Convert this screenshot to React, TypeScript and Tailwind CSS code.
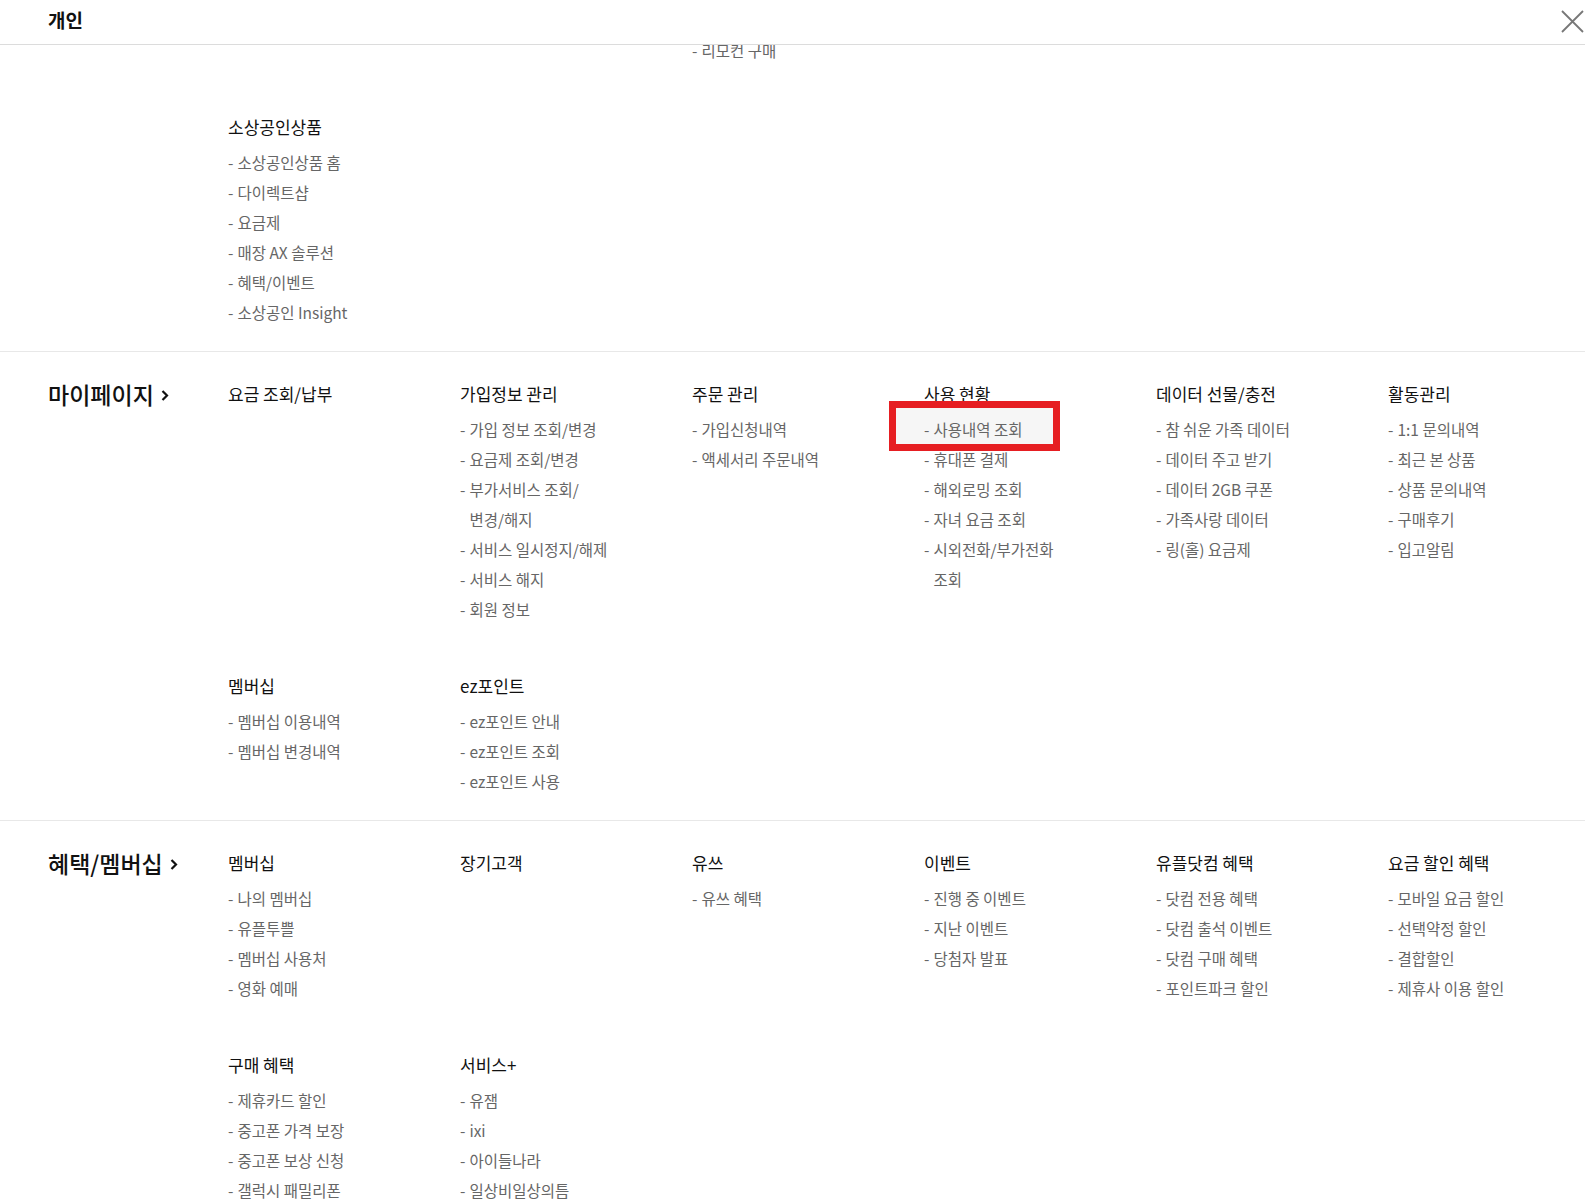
import React from "react";

type Item = { lines: string[]; active?: boolean };
type Group = { title?: string; items: Item[] } | null;

const it = (...lines: string[]): Item => ({ lines });

interface Section {
  title?: string;
  rows: Group[][];
}

const sections: Section[] = [
  {
    rows: [
      [null, null, { items: [it("리모컨 구매")] }],
      [
        {
          title: "소상공인상품",
          items: [
            it("소상공인상품 홈"),
            it("다이렉트샵"),
            it("요금제"),
            it("매장 AX 솔루션"),
            it("혜택/이벤트"),
            it("소상공인 Insight"),
          ],
        },
      ],
    ],
  },
  {
    title: "마이페이지",
    rows: [
      [
        { title: "요금 조회/납부", items: [] },
        {
          title: "가입정보 관리",
          items: [
            it("가입 정보 조회/변경"),
            it("요금제 조회/변경"),
            it("부가서비스 조회/", "변경/해지"),
            it("서비스 일시정지/해제"),
            it("서비스 해지"),
            it("회원 정보"),
          ],
        },
        {
          title: "주문 관리",
          items: [it("가입신청내역"), it("액세서리 주문내역")],
        },
        {
          title: "사용 현황",
          items: [
            { lines: ["사용내역 조회"], active: true },
            it("휴대폰 결제"),
            it("해외로밍 조회"),
            it("자녀 요금 조회"),
            it("시외전화/부가전화", "조회"),
          ],
        },
        {
          title: "데이터 선물/충전",
          items: [
            it("참 쉬운 가족 데이터"),
            it("데이터 주고 받기"),
            it("데이터 2GB 쿠폰"),
            it("가족사랑 데이터"),
            it("링(홀) 요금제"),
          ],
        },
        {
          title: "활동관리",
          items: [
            it("1:1 문의내역"),
            it("최근 본 상품"),
            it("상품 문의내역"),
            it("구매후기"),
            it("입고알림"),
          ],
        },
      ],
      [
        {
          title: "멤버십",
          items: [it("멤버십 이용내역"), it("멤버십 변경내역")],
        },
        {
          title: "ez포인트",
          items: [it("ez포인트 안내"), it("ez포인트 조회"), it("ez포인트 사용")],
        },
      ],
    ],
  },
  {
    title: "혜택/멤버십",
    rows: [
      [
        {
          title: "멤버십",
          items: [
            it("나의 멤버십"),
            it("유플투쁠"),
            it("멤버십 사용처"),
            it("영화 예매"),
          ],
        },
        { title: "장기고객", items: [] },
        { title: "유쓰", items: [it("유쓰 혜택")] },
        {
          title: "이벤트",
          items: [it("진행 중 이벤트"), it("지난 이벤트"), it("당첨자 발표")],
        },
        {
          title: "유플닷컴 혜택",
          items: [
            it("닷컴 전용 혜택"),
            it("닷컴 출석 이벤트"),
            it("닷컴 구매 혜택"),
            it("포인트파크 할인"),
          ],
        },
        {
          title: "요금 할인 혜택",
          items: [
            it("모바일 요금 할인"),
            it("선택약정 할인"),
            it("결합할인"),
            it("제휴사 이용 할인"),
          ],
        },
      ],
      [
        {
          title: "구매 혜택",
          items: [
            it("제휴카드 할인"),
            it("중고폰 가격 보장"),
            it("중고폰 보상 신청"),
            it("갤럭시 패밀리폰"),
          ],
        },
        {
          title: "서비스+",
          items: [it("유잼"), it("ixi"), it("아이들나라"), it("일상비일상의틈")],
        },
      ],
    ],
  },
];

function MenuItem({ item }: { item: Item }) {
  return (
    <li className="relative flex text-[15.5px] leading-[30px] text-[#666]">
      {item.active && (
        <span className="absolute -top-[13px] -bottom-[7px] -left-[35px] w-[171px] border-[7px] border-[#e61e22] bg-[#f6f6f6]" />
      )}
      <span className="relative mr-[4px]">-</span>
      <span className="relative">
        {item.lines.map((l, i) => (
          <span key={i} className="block">
            {l}
          </span>
        ))}
      </span>
    </li>
  );
}

function Column({ group }: { group: Group }) {
  if (!group) return <div />;
  return (
    <div>
      {group.title && (
        <h3 className="mt-[1px] text-[17px] font-normal leading-[30px] text-[#111]">
          {group.title}
        </h3>
      )}
      {group.items.length > 0 && (
        <ul className={group.title ? "mt-[5px]" : ""}>
          {group.items.map((item, i) => (
            <MenuItem key={i} item={item} />
          ))}
        </ul>
      )}
    </div>
  );
}

function Chevron() {
  return (
    <svg
      width="8"
      height="13"
      viewBox="0 0 8 13"
      className="ml-[7px] mt-[2px]"
      fill="none"
      stroke="#111"
      strokeWidth="2.2"
    >
      <path d="M1.5 2 L6 6.5 L1.5 11" />
    </svg>
  );
}

export default function App() {
  return (
    <div className="min-h-screen w-full overflow-hidden bg-white font-['Noto_Sans_CJK_KR','Noto_Sans',sans-serif]">
      <header className="relative z-10 flex h-[45px] items-center justify-between border-b border-[#dcdcdc] bg-white pb-[4px] pl-[48px]">
        <h1 className="text-[19px] font-bold text-[#111]">개인</h1>
        <button className="mr-[1px] mt-[2px] flex h-[24px] w-[24px] items-center justify-center">
          <svg width="23" height="23" viewBox="0 0 23 23" stroke="#777" strokeWidth="1.8">
            <path d="M1 1 L22 22 M22 1 L1 22" />
          </svg>
        </button>
      </header>

      <main className="-mt-[10px]">
        {sections.map((section, si) => (
          <section
            key={si}
            className={`flex border-b border-[#e8e8e8] pb-[24px] pl-[48px] ${
              si === 0 ? "pt-0" : "pt-[26px]"
            }`}
          >
            <div className="w-[180px] shrink-0">
              {section.title && (
                <h2 className="mt-[1px] flex items-center text-[23px] font-medium leading-[30px] text-[#111]">
                  {section.title}
                  <Chevron />
                </h2>
              )}
            </div>
            <div className="flex flex-col gap-[46px]">
              {section.rows.map((row, ri) => (
                <div key={ri} className="grid grid-cols-[repeat(6,232px)]">
                  {row.map((g, gi) => (
                    <Column key={gi} group={g} />
                  ))}
                </div>
              ))}
            </div>
          </section>
        ))}
      </main>
    </div>
  );
}
